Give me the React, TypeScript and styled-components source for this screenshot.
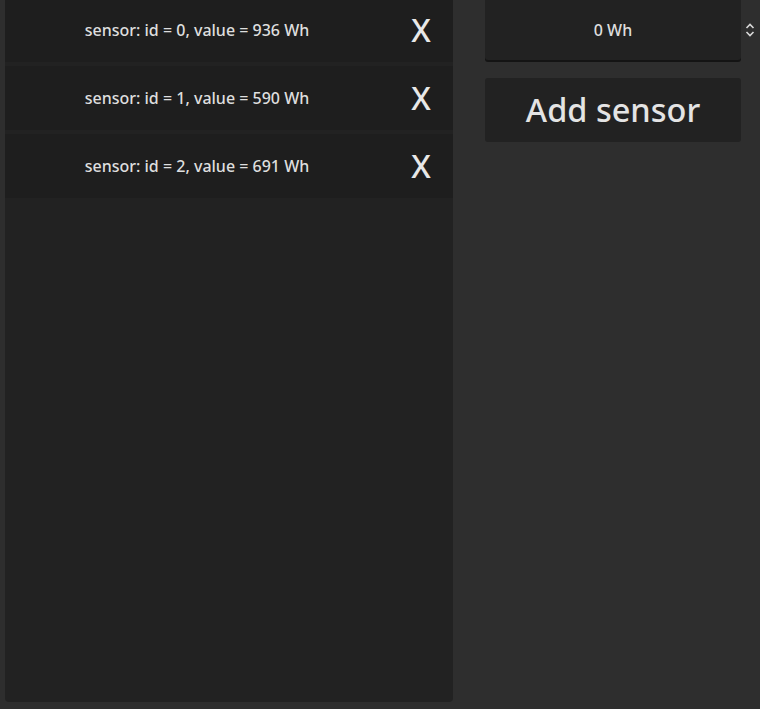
import React from "react";
import styled, { createGlobalStyle } from "styled-components";

type Sensor = {
  id: number;
  value: number;
};

const sensors: Sensor[] = [
  { id: 0, value: 936 },
  { id: 1, value: 590 },
  { id: 2, value: 691 },
];

const App = () => {
  return (
    <>
      <GlobalStyle />
      <Page>
        <SensorList>
          {sensors.map((s) => (
            <SensorRow key={s.id}>
              <SensorLabel>
                sensor: id = {s.id}, value = {s.value} Wh
              </SensorLabel>
              <DeleteButton>X</DeleteButton>
            </SensorRow>
          ))}
        </SensorList>
        <Controls>
          <InputWrap>
            <ValueInput>0 Wh</ValueInput>
            <Spinner width="10" height="14" viewBox="0 0 10 14">
              <path
                d="M1.5 5 L5 1.5 L8.5 5 M1.5 9 L5 12.5 L8.5 9"
                fill="none"
                stroke="#d8d8d8"
                strokeWidth="1.6"
              />
            </Spinner>
          </InputWrap>
          <AddButton>Add sensor</AddButton>
        </Controls>
      </Page>
    </>
  );
};

export default App;

const GlobalStyle = createGlobalStyle`
  html, body {
    margin: 0;
    padding: 0;
    background: #2e2e2e;
    overflow: hidden;
  }
  body {
    font-family: "Noto Sans", "Open Sans", sans-serif;
    color: #dedede;
  }
`;

const Page = styled.div`
  display: flex;
  align-items: flex-start;
  gap: 32px;
  height: 709px;
  margin-top: -2px;
  padding: 0 5px;
  box-sizing: border-box;
`;

const SensorList = styled.div`
  display: flex;
  flex-direction: column;
  gap: 4px;
  width: 448px;
  height: 704px;
  background: #222222;
  border-radius: 0 0 4px 4px;
`;

const SensorRow = styled.div`
  display: flex;
  align-items: center;
  height: 64px;
  background: #1e1e1e;
`;

const SensorLabel = styled.div`
  flex: 1;
  text-align: center;
  font-size: 16px;
  font-weight: 500;
`;

const DeleteButton = styled.div`
  width: 64px;
  height: 64px;
  display: flex;
  align-items: center;
  justify-content: center;
  padding-bottom: 2px;
  box-sizing: border-box;
  font-size: 32px;
  font-weight: 500;
  color: #e8e8e8;
`;

const Controls = styled.div`
  display: flex;
  flex-direction: column;
  gap: 18px;
  width: 256px;
`;

const InputWrap = styled.div`
  position: relative;
`;

const ValueInput = styled.div`
  height: 62px;
  display: flex;
  align-items: center;
  justify-content: center;
  padding-top: 2px;
  box-sizing: border-box;
  background: #222222;
  border-radius: 0 0 3px 3px;
  box-shadow: 0 2px 0 #141414;
  font-size: 16px;
  font-weight: 500;
`;

const Spinner = styled.svg`
  position: absolute;
  right: -14px;
  top: 25px;
`;

const AddButton = styled.div`
  height: 64px;
  display: flex;
  align-items: center;
  justify-content: center;
  padding-bottom: 2px;
  box-sizing: border-box;
  background: #222222;
  border-radius: 3px;
  font-size: 32.5px;
  font-weight: 500;
  color: #e4e4e4;
`;
